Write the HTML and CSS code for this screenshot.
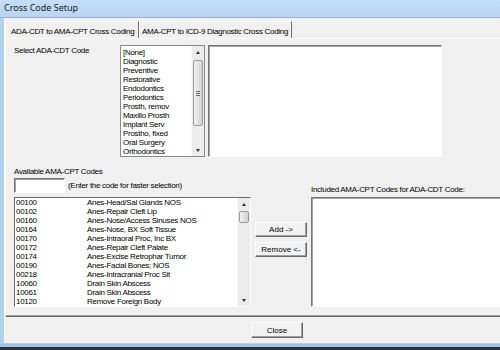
FILE: index.html
```html
<!DOCTYPE html>
<html lang="en">
<head>
  <meta charset="UTF-8" />
  <title>Cross Code Setup</title>
  <link rel="stylesheet" href="styles.css">
</head>
<body>

<div class="screen">
  <div class="window">
    <div class="titlebar">Cross Code Setup</div>

    <div class="client">
      <div class="tabs">
        <div class="tab active">ADA-CDT to AMA-CPT Cross Coding</div>
        <div class="tab">AMA-CPT to ICD-9 Diagnostic Cross Coding</div>
      </div>

      <div class="panel">
        <div class="row-top">
          <div class="label select-label">Select ADA-CDT Code</div>

          <div class="listbox cdt-list">
            <ul class="items">
              <li>[None]</li>
              <li>Diagnostic</li>
              <li>Preventive</li>
              <li>Restorative</li>
              <li>Endodontics</li>
              <li>Periodontics</li>
              <li>Prosth, remov</li>
              <li>Maxillo Prosth</li>
              <li>Implant Serv</li>
              <li>Prostho, fixed</li>
              <li>Oral Surgery</li>
              <li>Orthodontics</li>
            </ul>
            <div class="vscroll">
              <div class="arrow up"></div>
              <div class="track"><div class="thumb big-thumb"><span class="grip"></span></div></div>
              <div class="arrow down"></div>
            </div>
          </div>

          <div class="sunken detail-box"></div>
        </div>

        <div class="row-bottom">
          <div class="head-left">
            <div class="label">Available AMA-CPT Codes</div>
            <div class="search-row">
              <input type="text" class="sunken code-input" />
              <span class="label">(Enter the code for faster selection)</span>
            </div>
          </div>
          <div></div>
          <div class="head-right label">Included AMA-CPT Codes for ADA-CDT Code:</div>

          <div class="sunken cpt-list">
            <div class="items">
              <div class="cpt-row"><span class="code">00100</span><span>Anes-Head/Sal Glands NOS</span></div>
              <div class="cpt-row"><span class="code">00102</span><span>Anes-Repair Cleft Lip</span></div>
              <div class="cpt-row"><span class="code">00160</span><span>Anes-Nose/Access Sinuses NOS</span></div>
              <div class="cpt-row"><span class="code">00164</span><span>Anes-Nose, BX Soft Tissue</span></div>
              <div class="cpt-row"><span class="code">00170</span><span>Anes-Intraoral Proc, Inc BX</span></div>
              <div class="cpt-row"><span class="code">00172</span><span>Anes-Repair Cleft Palate</span></div>
              <div class="cpt-row"><span class="code">00174</span><span>Anes-Excise Retrophar Tumor</span></div>
              <div class="cpt-row"><span class="code">00190</span><span>Anes-Facial Bones; NOS</span></div>
              <div class="cpt-row"><span class="code">00218</span><span>Anes-Intracranial Proc Sit</span></div>
              <div class="cpt-row"><span class="code">10060</span><span>Drain Skin Abscess</span></div>
              <div class="cpt-row"><span class="code">10061</span><span>Drain Skin Abscess</span></div>
              <div class="cpt-row"><span class="code">10120</span><span>Remove Foreign Body</span></div>
            </div>
            <div class="vscroll">
              <div class="arrow up"></div>
              <div class="track"><div class="thumb small-thumb"></div></div>
              <div class="arrow down"></div>
            </div>
          </div>

          <div class="move-buttons">
            <button class="btn">Add -&gt;</button>
            <button class="btn">Remove &lt;-</button>
          </div>

          <div class="sunken included-list"></div>
        </div>
      </div>

      <div class="footer">
        <button class="btn close-btn">Close</button>
      </div>
    </div>
  </div>
  <div class="taskbar"></div>
</div>

</body>
</html>
```

FILE: styles.css
```css
body {
  margin: 0;
  background: #2b2f36;
  font-family: "Liberation Sans", Arial, sans-serif;
  font-size: 8px;
  letter-spacing: -0.3px;
  color: #000;
  overflow: hidden;
}
.screen {
  width: 500px;
  height: 350px;
  overflow: hidden;
}
.window {
  width: 540px;
  height: 347px;
  background: #b3cfee;
  border-bottom: 3px solid #a4c2e6;
  box-sizing: border-box;
}
.titlebar {
  height: 18px;
  box-sizing: border-box;
  padding-left: 4px;
  line-height: 16px;
  font-family: "Noto Sans", sans-serif;
  font-size: 9px;
  letter-spacing: 0;
  color: #1a1a1a;
  background: linear-gradient(#c6def7, #b9d5f3);
  border-bottom: 1px solid #95b1d3;
}
.client {
  margin-left: 4px;
  height: 325px;
  background: #f0f0f0;
  border-left: 1px solid #fbfbfb;
  box-sizing: border-box;
}
.taskbar {
  height: 3px;
  background: #2b2f36;
}

/* tabs */
.tabs {
  display: flex;
  height: 20px;
  box-sizing: border-box;
  padding-top: 3px;
}
.tab {
  height: 17px;
  box-sizing: border-box;
  padding: 3px 3px 0 2px;
  line-height: 13px;
  border-top: 1px solid #fafafa;
  border-left: 1px solid #fafafa;
  border-right: 1px solid #6e6e6e;
  white-space: nowrap;
}
.tab.active {
  width: 134px;
  padding-left: 5px;
}

/* panel */
.panel {
  height: 279px;
  box-sizing: border-box;
  border-top: 1px solid #fcfcfc;
  border-left: 1px solid #fcfcfc;
  border-bottom: 1px solid #696969;
  box-shadow: inset 0 -1px 0 #a0a0a0;
  padding: 6px 0 0 8px;
}
.label {
  line-height: 9px;
  white-space: nowrap;
}
.row-top {
  display: flex;
  height: 112px;
}
.select-label {
  width: 106px;
  padding-top: 1px;
}
.listbox {
  display: flex;
  background: #fff;
  border: 1px solid #8a8a8a;
}
.cdt-list {
  width: 85px;
  box-sizing: border-box;
}
.items {
  flex: 1;
  list-style: none;
  margin: 0;
  padding: 2px 0 0 2px;
  line-height: 9px;
  white-space: nowrap;
  overflow: hidden;
}
.sunken {
  background: #fff;
  border: 1px solid;
  border-color: #777 #fdfdfd #fdfdfd #777;
  box-shadow: inset 1px 1px 0 #a0a0a0;
  box-sizing: border-box;
}
.detail-box {
  width: 234px;
  margin-left: 3px;
}

/* scrollbar */
.vscroll {
  width: 12px;
  display: flex;
  flex-direction: column;
  background: #ececec;
  border-left: 1px solid #f8f8f8;
}
.arrow {
  height: 12px;
  display: flex;
  align-items: center;
  justify-content: center;
}
.arrow::after {
  content: "";
  border-left: 2.5px solid transparent;
  border-right: 2.5px solid transparent;
}
.arrow.up::after {
  border-bottom: 3px solid #333;
}
.arrow.down::after {
  border-top: 3px solid #333;
}
.track {
  flex: 1;
  padding-top: 2px;
}
.thumb {
  margin: 0 1px;
  border: 1px solid #9b9b9b;
  border-radius: 2px;
  background: linear-gradient(90deg, #f2f2f2, #e0e0e0 60%, #d3d3d3);
  display: flex;
  align-items: center;
  justify-content: center;
}
.big-thumb {
  height: 66px;
  box-sizing: border-box;
}
.small-thumb {
  height: 12px;
  box-sizing: border-box;
  margin-top: -1px;
}
.grip {
  width: 4px;
  height: 5px;
  background: repeating-linear-gradient(#6b6b6b 0 1px, transparent 1px 2px);
}

/* lower section */
.row-bottom {
  display: grid;
  grid-template-columns: 237px 52px 1fr;
  grid-template-rows: auto 110px;
  column-gap: 4px;
  margin-top: 10px;
}
.head-left {
  padding-bottom: 4px;
}
.search-row {
  display: flex;
  align-items: center;
  gap: 3px;
  margin-top: 2px;
}
.code-input {
  width: 51px;
  height: 15px;
  margin: 0;
  padding: 0;
  font: inherit;
}
.head-right {
  align-self: end;
  padding-bottom: 3px;
}
.cpt-list {
  display: flex;
  box-shadow: none;
  border-color: #696969 #fdfdfd #fdfdfd #696969;
}
.cpt-list .items {
  padding: 0 0 0 1px;
}
.cpt-row {
  display: flex;
}
.code {
  width: 71px;
  flex: none;
}
.move-buttons {
  display: flex;
  flex-direction: column;
  gap: 5px;
  padding-top: 25px;
}
.btn {
  height: 15px;
  margin: 0;
  padding: 0;
  font: inherit;
  color: #000;
  background: #f2f2f2;
  border: 1px solid;
  border-color: #fff #696969 #696969 #fff;
  box-shadow: inset -1px -1px 0 #a0a0a0;
}
.included-list {
  margin-right: 10px;
}

/* footer */
.footer {
  padding: 5px 0 0 246px;
}
.close-btn {
  width: 52px;
  height: 16px;
}
```
